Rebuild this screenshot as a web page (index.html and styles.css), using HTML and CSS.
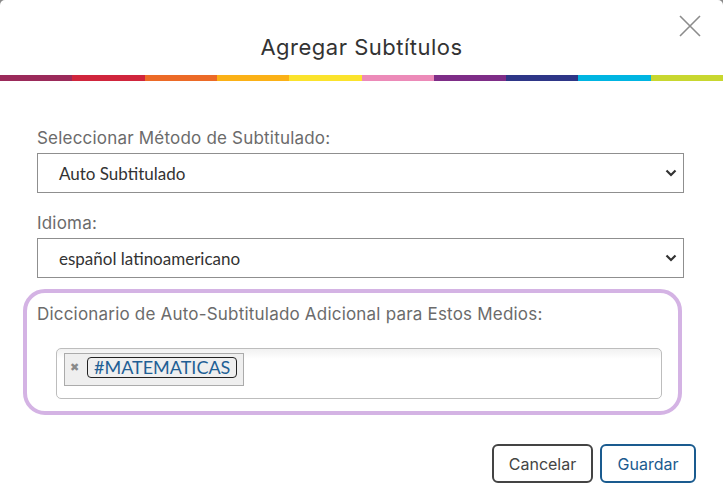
FILE: index.html
```html
<!DOCTYPE html>
<html lang="es">
<head>
<meta charset="utf-8">
<title>Agregar Subtítulos</title>
<link rel="stylesheet" href="styles.css">
</head>
<body>
<div class="modal">
  <header class="modal-header">
    <h1 class="modal-title">Agregar Subtítulos</h1>
    <button class="close-btn" aria-label="Cerrar">
      <svg width="22" height="22" viewBox="0 0 22 22"><path d="M1 1 L21 21 M21 1 L1 21" stroke="#8c8c8c" stroke-width="1.6" fill="none"/></svg>
    </button>
  </header>
  <div class="rainbow">
    <span class="c1"></span><span class="c2"></span><span class="c3"></span><span class="c4"></span><span class="c5"></span>
    <span class="c6"></span><span class="c7"></span><span class="c8"></span><span class="c9"></span><span class="c10"></span>
  </div>
  <div class="modal-body">
    <div class="field">
      <label class="label">Seleccionar Método de Subtitulado:</label>
      <div class="select"><span>Auto Subtitulado</span>
        <svg class="chev" width="12" height="8" viewBox="0 0 12 8"><path d="M1.5 1.5 L6 6 L10.5 1.5" stroke="#333" stroke-width="2.2" fill="none"/></svg>
      </div>
    </div>
    <div class="field">
      <label class="label">Idioma:</label>
      <div class="select"><span>español latinoamericano</span>
        <svg class="chev" width="12" height="8" viewBox="0 0 12 8"><path d="M1.5 1.5 L6 6 L10.5 1.5" stroke="#333" stroke-width="2.2" fill="none"/></svg>
      </div>
    </div>
    <div class="dict">
      <label class="label">Diccionario de Auto-Subtitulado Adicional para Estos Medios:</label>
      <div class="tag-input">
        <div class="chip"><span class="chip-x">✖</span><span class="chip-text">#MATEMATICAS</span></div>
      </div>
    </div>
    <div class="actions">
      <button class="btn btn-cancel">Cancelar</button>
      <button class="btn btn-save">Guardar</button>
    </div>
  </div>
</div>
</body>
</html>
```
FILE: styles.css
```css
html, body {
  margin: 0;
  padding: 0;
  background: #8a8a8a;
}
body {
  font-family: "Lato", "Liberation Sans", sans-serif;
  color: #333;
}
.modal {
  background: #fff;
  width: 723px;
  height: 496px;
  border-radius: 5px 5px 0 0;
  overflow: hidden;
}
.modal-header {
  position: relative;
  height: 75px;
  display: flex;
  align-items: flex-start;
  justify-content: center;
}
.modal-title {
  margin: 34px 0 0;
  font-family: "Inter", "Lato", sans-serif;
  font-size: 22px;
  font-weight: 400;
  line-height: 26px;
  letter-spacing: 0.5px;
  color: #333;
}
.close-btn {
  position: absolute;
  top: 15px;
  right: 22px;
  background: none;
  border: 0;
  padding: 0;
  width: 22px;
  height: 22px;
  display: flex;
}
.rainbow {
  display: grid;
  grid-template-columns: repeat(10, 1fr);
  height: 6px;
}
.c1 { background: #9b2a5a; }
.c2 { background: #d0253c; }
.c3 { background: #ec6a27; }
.c4 { background: #fbb116; }
.c5 { background: #fbe32c; }
.c6 { background: #ec8ab8; }
.c7 { background: #7e2d87; }
.c8 { background: #2e3687; }
.c9 { background: #00b5e2; }
.c10 { background: #c8d72f; }
.modal-body {
  padding: 47px 39px 0 37px;
  display: flex;
  flex-direction: column;
}
.field {
  display: flex;
  flex-direction: column;
  gap: 5px;
  margin-bottom: 20px;
}
.label {
  font-family: "Inter", "Lato", sans-serif;
  font-size: 17px;
  line-height: 20px;
  letter-spacing: 0.2px;
  color: #6b6b6b;
}
.select {
  height: 40px;
  box-sizing: border-box;
  border: 1px solid #8f8f8f;
  display: flex;
  align-items: center;
  justify-content: space-between;
  padding: 0 6px 0 21px;
  font-size: 17px;
  color: #333;
}
.chev { display: block; }
.dict {
  margin: -9px 2px 0 -14px;
  border: 4px solid #d4b3e4;
  border-radius: 22px;
  padding: 11px 16px 12px 10px;
  display: flex;
  flex-direction: column;
  gap: 24px;
}
.tag-input {
  margin-left: 19px;
  height: 51px;
  box-sizing: border-box;
  border: 1px solid #bdbdbd;
  border-radius: 5px;
  background: linear-gradient(#f1f1f1, #fff 10px);
  padding: 4px 7px;
  display: flex;
  align-items: flex-start;
}
.chip {
  display: flex;
  align-items: center;
  gap: 8px;
  height: 33px;
  box-sizing: border-box;
  border: 1px solid #ababab;
  background: #efefef;
  padding: 0 6px 5px 5px;
}
.chip-x {
  font-size: 11px;
  color: #8a8a8a;
  align-self: flex-start;
  margin-top: 6px;
}
.chip-text {
  font-size: 18px;
  line-height: 19px;
  color: #1f5f95;
  border: 1px solid #222;
  border-radius: 4px;
  padding: 0 6px;
}
.actions {
  display: flex;
  justify-content: flex-end;
  gap: 7px;
  margin: 29px -12px 0 0;
}
.btn {
  height: 39px;
  box-sizing: border-box;
  background: #fff;
  border-radius: 6px;
  font-family: "Inter", "Lato", sans-serif;
  font-size: 16px;
  padding: 0;
}
.btn-cancel {
  width: 101px;
  border: 2px solid #444;
  color: #444;
}
.btn-save {
  width: 96px;
  border: 2px solid #1a5b8f;
  color: #1a5b8f;
}
```
